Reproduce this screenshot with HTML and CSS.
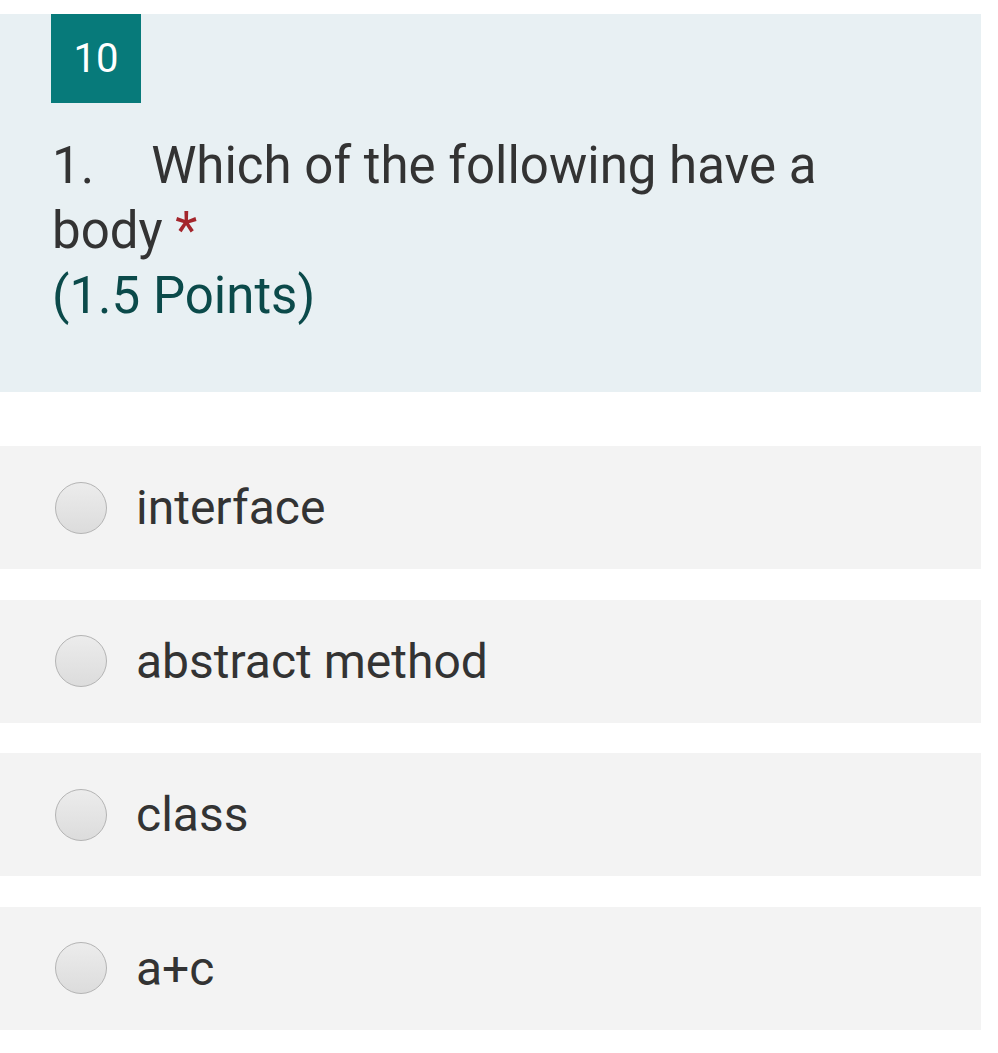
FILE: index.html
```html
<!DOCTYPE html>
<html>
<head>
<meta charset="utf-8">
<link rel="stylesheet" href="styles.css">
</head>
<body>
<div class="page">
  <section class="question-head">
    <div class="badge">10</div>
    <div class="title"><span class="num">1.</span><span class="qtext">Which of the following have a body</span> <span class="req">*</span></div>
    <div class="points">(1.5 Points)</div>
  </section>
  <div class="options">
    <label class="option"><span class="radio"></span><span class="label">interface</span></label>
    <label class="option"><span class="radio"></span><span class="label">abstract method</span></label>
    <label class="option"><span class="radio"></span><span class="label">class</span></label>
    <label class="option"><span class="radio"></span><span class="label">a+c</span></label>
  </div>
</div>
</body>
</html>
```

FILE: styles.css
```css
html, body {
  margin: 0;
  padding: 0;
  background: #ffffff;
}
body {
  font-family: Roboto, "Noto Sans", sans-serif;
  color: #333333;
}
.page {
  width: 981px;
  padding-top: 14px;
}
.question-head {
  background: #e8f0f3;
  height: 378px;
  box-sizing: border-box;
  padding-left: 52px;
}
.badge {
  width: 90px;
  height: 89px;
  margin-left: -1px;
  background: #077a7a;
  color: #ffffff;
  font-size: 40px;
  display: flex;
  align-items: center;
  justify-content: center;
}
.title {
  margin-top: 30px;
  font-size: 51px;
  line-height: 65px;
  color: #333333;
  width: 800px;
}
.num {
  margin-right: 57px;
}
.req {
  color: #a4262c;
}
.points {
  font-size: 51px;
  line-height: 65px;
  color: #0b4a4a;
}
.options {
  margin-top: 54px;
  display: flex;
  flex-direction: column;
  gap: 30.5px;
}
.option {
  height: 123px;
  background: #f3f3f3;
  display: flex;
  align-items: center;
  padding-left: 55px;
}
.radio {
  width: 50px;
  height: 50px;
  border-radius: 50%;
  border: 1px solid #b4b4b4;
  background: linear-gradient(#ececec, #dcdcdc);
  flex: none;
}
.label {
  margin-left: 29px;
  font-size: 48px;
  color: #333333;
}
```
